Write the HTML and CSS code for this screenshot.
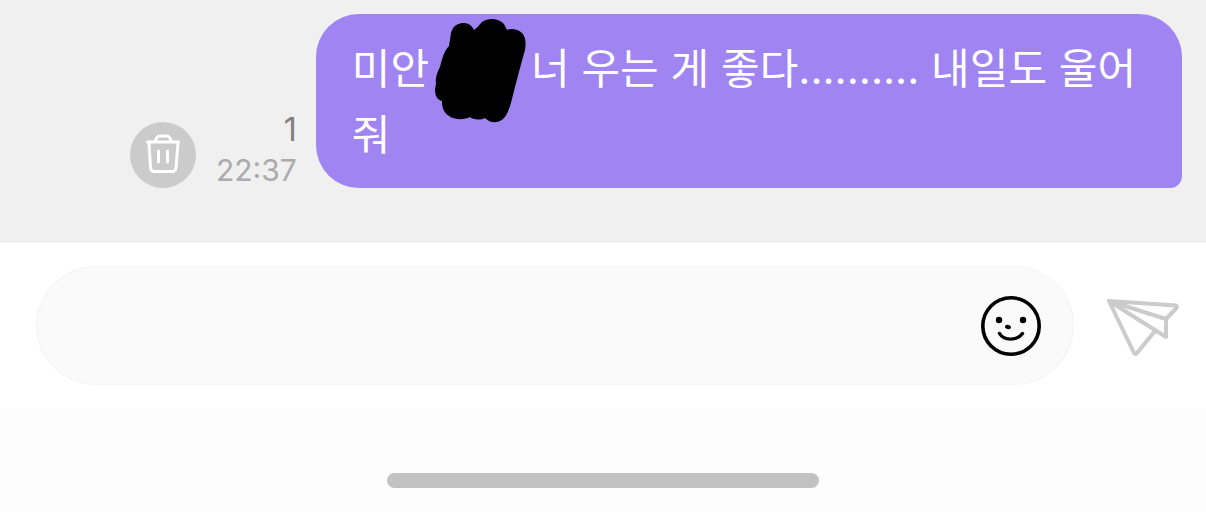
FILE: index.html
```html
<!DOCTYPE html>
<html lang="ko">
<head>
<meta charset="utf-8">
<meta name="viewport" content="width=device-width, initial-scale=1">
<title>채팅</title>
<link rel="stylesheet" href="styles.css">
</head>
<body>
<main class="chat">
  <article class="message">
    <button class="delete" type="button" aria-label="삭제">
      <svg class="delete-icon" viewBox="0 0 66 66" fill="none" stroke="#fff" stroke-width="3" stroke-linecap="round" stroke-linejoin="round" aria-hidden="true">
        <path d="M17.500 20H48.500M19 21L20.500 46Q21 49.500 24.500 49.500H42Q45.500 49.500 46 46L48 21M25 19L27 15.500Q28 14 30 14H36.500Q38.500 14 39.500 15.500L41.500 19M28.500 29V40M37.500 29V40"/>
      </svg>
    </button>
    <div class="meta">
      <span class="unread">1</span>
      <time class="time">22:37</time>
    </div>
    <p class="bubble">미안<span class="redacted"><svg class="scribble" viewBox="0 0 92 104" aria-hidden="true"><path d="M17 14C19 6 25 4 30 4C35 4 38 7 40 11C43 9 45 6 48 3C54-1 63-1 69 4C71 6 72 9 73 11C77 9 84 10 88 14C92 18 92 25 91 31C87 45 82 64 78 80C76 88 73 97 69 100C63 105 56 104 51 99C45 102 38 100 36 98C31 101 20 101 15 97C9 93 8 88 8 82C3 81 1 76 1 71C1 68 2 66 2 65C1 58 4 52 6 48C8 40 10 32 15 27Z"/></svg></span>너 우는 게 좋다.......... 내일도 울어줘</p>
  </article>
</main>
<footer class="dock">
  <form class="composer">
    <div class="field">
      <input class="entry" type="text" aria-label="메시지 입력">
      <button class="emoji" type="button" aria-label="이모티콘">
        <svg class="emoji-icon" viewBox="0 0 60 60" fill="none" aria-hidden="true">
          <circle cx="30" cy="30" r="28.200" stroke="#000" stroke-width="3.600"/>
          <circle cx="18" cy="24" r="3.200" fill="#000"/>
          <circle cx="42" cy="24" r="3.200" fill="#000"/>
          <ellipse cx="27" cy="31" rx="3" ry="2" transform="rotate(15 27 31)" fill="#000"/>
          <path d="M18.500 37.500C23 45 36 45 41.500 37.500" stroke="#000" stroke-width="3.400" stroke-linecap="round"/>
        </svg>
      </button>
    </div>
    <button class="send" type="submit" aria-label="보내기">
      <svg class="send-icon" viewBox="0 0 74 60" fill="none" stroke="#cbcbcb" stroke-width="4" stroke-linecap="round" stroke-linejoin="round" aria-hidden="true">
        <path d="M3 5L70 9.500Q72 10.500 70 12.500L60 23L3 5L60 41V23M3 5L28 57Q29 59 31 57L49 35"/>
      </svg>
    </button>
  </form>
  <div class="home-bar"></div>
</footer>
</body>
</html>
```
FILE: styles.css
```css
* {
  box-sizing: border-box;
}

body {
  margin: 0;
  min-height: 100vh;
  display: flex;
  flex-direction: column;
  background: #fdfdfd;
  font-family: Inter, "Noto Sans CJK KR", sans-serif;
}

button {
  padding: 0;
  border: 0;
  background: none;
  cursor: pointer;
}

svg {
  display: block;
}

.chat {
  padding: 14px 24px 55px 130px;
  background: #f0f0f0;
}

.message {
  display: flex;
  align-items: flex-end;
}

.delete {
  flex: none;
  border-radius: 50%;
  background: #cbcbcb;
}

.delete-icon {
  width: 66px;
  height: 66px;
}

.meta {
  display: flex;
  flex: none;
  flex-direction: column;
  align-items: flex-end;
  margin: 0 19px 0 20px;
}

.unread {
  color: #808080;
  font-size: 32px;
  line-height: 44px;
}

.time {
  color: #ababab;
  font-size: 30px;
  line-height: 36px;
}

.bubble {
  flex: 1;
  min-width: 0;
  margin: 0;
  padding: 22px 36px 20px;
  border-radius: 43px 43px 12px 43px;
  background: #a085f2;
  color: #fff;
  font-size: 42px;
  font-weight: 400;
  line-height: 66px;
  word-break: break-all;
}

.redacted {
  position: relative;
  display: inline-block;
  width: 102px;
  height: 42px;
  vertical-align: middle;
}

.scribble {
  position: absolute;
  top: -33px;
  left: 5px;
  width: 92px;
  height: 104px;
}

.dock {
  display: flex;
  flex: 1;
  flex-direction: column;
  align-items: center;
  justify-content: space-between;
  padding-bottom: 24px;
}

.composer {
  display: flex;
  align-items: center;
  align-self: stretch;
  gap: 32px;
  padding: 23px 26px 23px 36px;
  background: #fff;
}

.field {
  display: flex;
  flex: 1;
  align-items: center;
  padding: 0 32px 0 40px;
  border: 1px solid #f3f3f3;
  border-radius: 60px;
  background: #fafafa;
}

.entry {
  flex: 1;
  min-width: 0;
  height: 117px;
  border: 0;
  outline: 0;
  background: none;
  font: inherit;
  font-size: 42px;
}

.emoji-icon {
  width: 60px;
  height: 60px;
}

.send-icon {
  width: 74px;
  height: 60px;
}

.home-bar {
  width: 432px;
  max-width: 80%;
  height: 15px;
  border-radius: 8px;
  background: #c2c2c2;
}
```
